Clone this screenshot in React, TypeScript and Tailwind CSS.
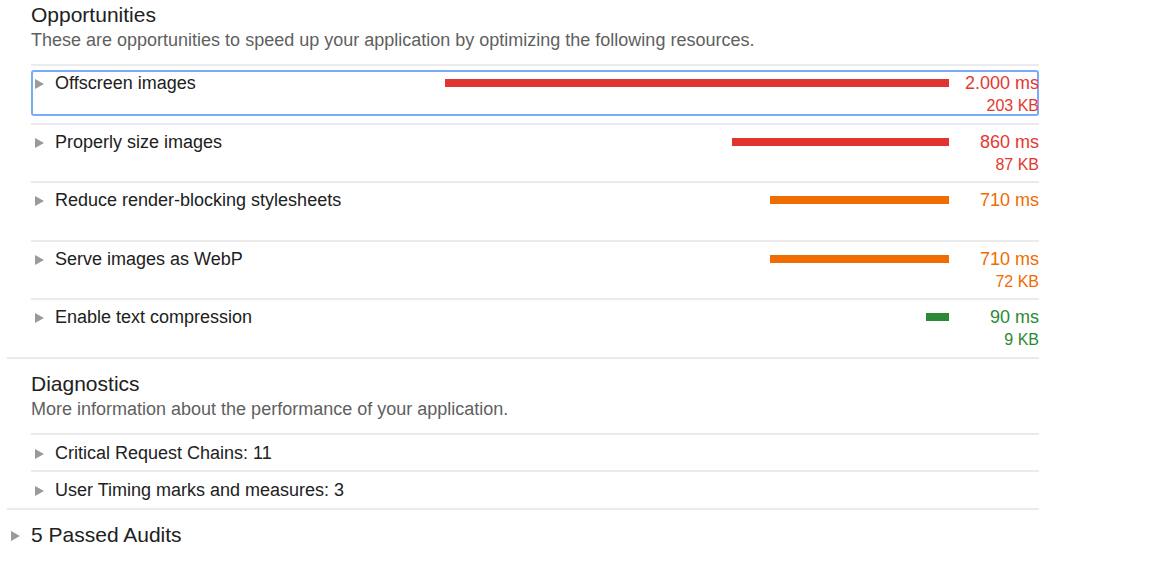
const opportunities = [
  { title: "Offscreen images", ms: 2000, label: "2.000 ms", kb: "203 KB", tone: "red", focused: true },
  { title: "Properly size images", ms: 860, label: "860 ms", kb: "87 KB", tone: "red" },
  { title: "Reduce render-blocking stylesheets", ms: 710, label: "710 ms", kb: "", tone: "orange" },
  { title: "Serve images as WebP", ms: 710, label: "710 ms", kb: "72 KB", tone: "orange" },
  { title: "Enable text compression", ms: 90, label: "90 ms", kb: "9 KB", tone: "green" },
];

const barColor: Record<string, string> = {
  red: "bg-[#e2342f]",
  orange: "bg-[#ef6c00]",
  green: "bg-[#2a8a34]",
};

const textColor: Record<string, string> = {
  red: "text-[#e3382f]",
  orange: "text-[#ef6c00]",
  green: "text-[#2a8a34]",
};

function Arrow() {
  return <span className="block w-0 h-0 border-y-[5px] border-y-transparent border-l-[9px] border-l-[#9a9a9a]" />;
}

function SectionHead({ title, desc }: { title: string; desc: string }) {
  return (
    <div>
      <h2 className="text-[21px] leading-[24px] text-[#212121]">{title}</h2>
      <p className="mt-[2px] text-[18px] leading-[22px] text-[#5f5f5f]">{desc}</p>
    </div>
  );
}

export default function App() {
  return (
    <div className="w-[1154px] h-[572px] bg-white overflow-hidden font-['Liberation_Sans',Arial,sans-serif] text-[#212121]">
      <div className="w-[1032px] ml-[7px]">
        {/* Opportunities */}
        <div className="pl-[24px] pt-[3px] border-b-2 border-[#ebebeb]">
          <SectionHead
            title="Opportunities"
            desc="These are opportunities to speed up your application by optimizing the following resources."
          />
          <div className="mt-[13px]">
            {opportunities.map((o) => (
              <div key={o.title} className="border-t-2 border-[#ebebeb] pt-[4px] pb-[6.5px]">
                <div
                  className={
                    "flex items-start pt-[2px] rounded-[3px] " +
                    (o.focused ? "ring-2 ring-inset ring-[#7baaf7]" : "")
                  }
                >
                  <div className="w-[24px] pl-[4px] pt-[7px]">
                    <Arrow />
                  </div>
                  <div className="flex-1 text-[18px] leading-[22px]">{o.title}</div>
                  <div className="w-[504px] flex justify-end pt-[7px]">
                    <div className={"h-[8px] " + barColor[o.tone]} style={{ width: Math.round((o.ms / 2000) * 504) }} />
                  </div>
                  <div className={"w-[90px] text-right " + textColor[o.tone]}>
                    <div className="text-[18px] leading-[22px]">{o.label}</div>
                    <div className="text-[16px] leading-[22px] h-[22px] pt-[1px]">{o.kb}</div>
                  </div>
                </div>
              </div>
            ))}
          </div>
        </div>

        {/* Diagnostics */}
        <div className="pl-[24px] pt-[13px] border-b-2 border-[#ebebeb]">
          <SectionHead title="Diagnostics" desc="More information about the performance of your application." />
          <div className="mt-[13px]">
            {["Critical Request Chains: 11", "User Timing marks and measures: 3"].map((t) => (
              <div key={t} className="border-t-2 border-[#ebebeb] pt-[7px] pb-[6.5px] flex items-start">
                <div className="w-[24px] pl-[4px] pt-[7px]">
                  <Arrow />
                </div>
                <div className="text-[18px] leading-[22px]">{t}</div>
              </div>
            ))}
          </div>
        </div>

        {/* Passed audits */}
        <div className="mt-[13px] flex items-start">
          <div className="w-[24px] pl-[4px] pt-[8px]">
            <Arrow />
          </div>
          <div className="text-[21px] leading-[24px] text-[#212121]">5 Passed Audits</div>
        </div>
      </div>
    </div>
  );
}
